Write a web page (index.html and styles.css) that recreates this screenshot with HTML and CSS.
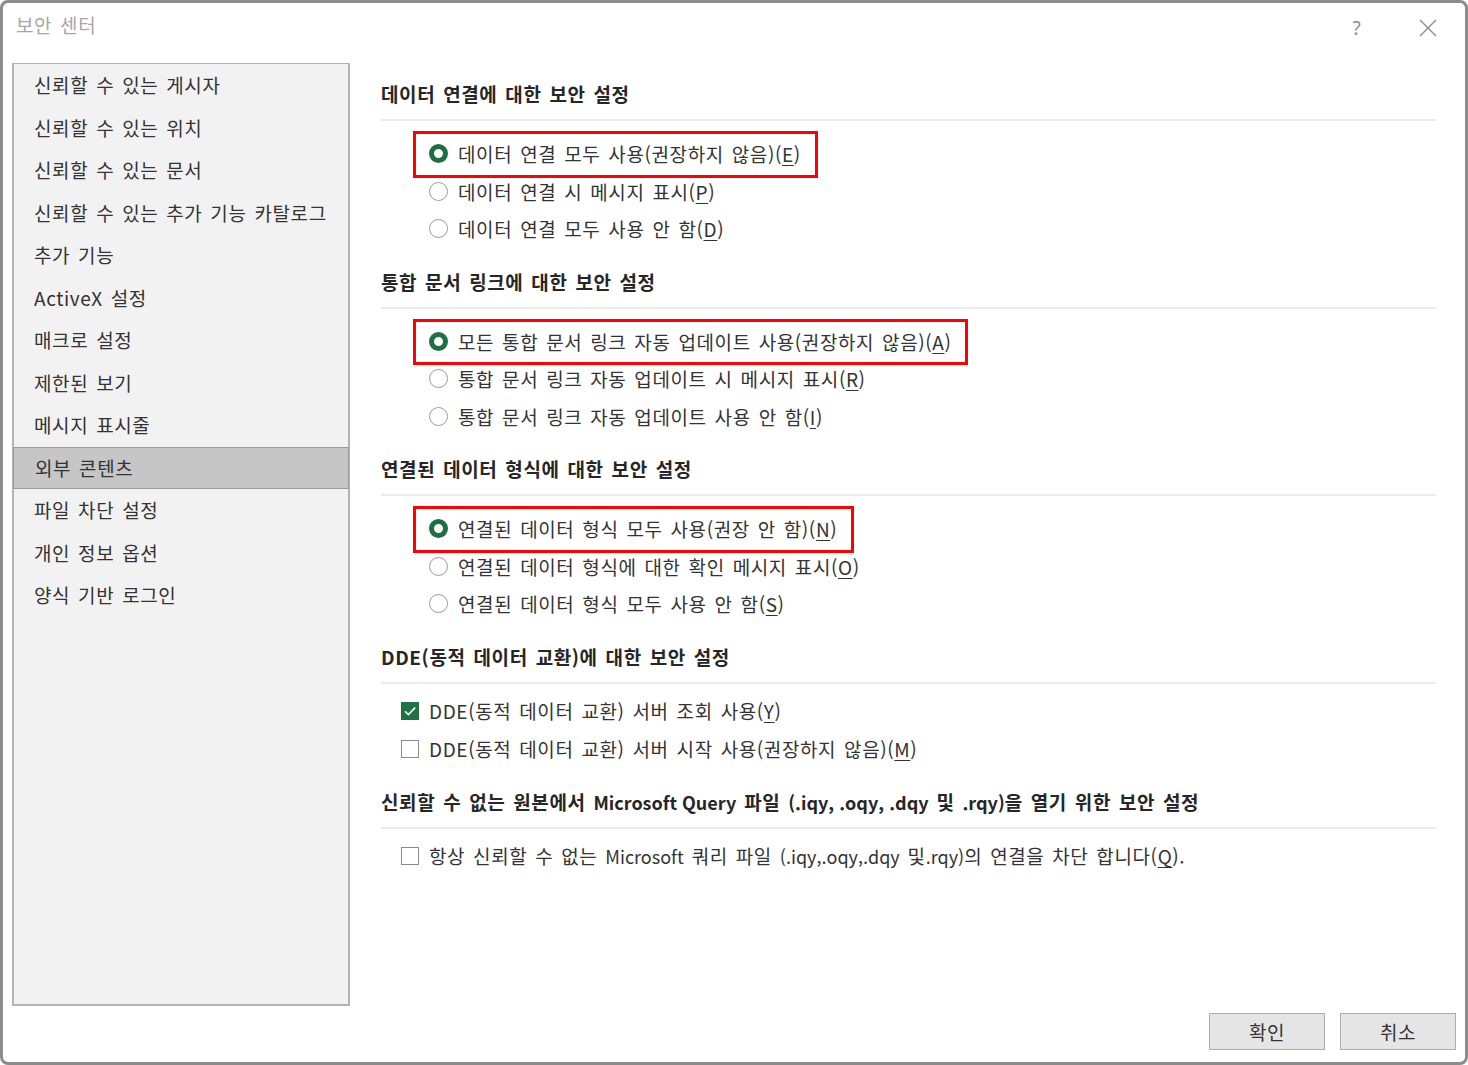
FILE: index.html
```html
<!DOCTYPE html>
<html lang="ko">

<head>
    <meta charset="UTF-8">
    <meta name="viewport" content="width=device-width, initial-scale=1.0">
    <title>보안 센터</title>

    <link rel="stylesheet" href="styles.css">
</head>

<body>

    <!-- DIALOG -->
    <div class="dialog">
        <div class="titlebar">
            <span class="titlebar__title">보안 센터</span>
            <div class="titlebar__controls">
                <span class="titlebar__help">?</span>
                <span class="titlebar__close">
                    <svg width="18" height="18" viewBox="0 0 18 18">
                        <path d="M1 1 L17 17 M17 1 L1 17" stroke="#8a8a8a" stroke-width="1.4" fill="none" />
                    </svg>
                </span>
            </div>
        </div>

        <div class="dialog__body">
            <ul class="nav">
                <li class="nav__item">신뢰할 수 있는 게시자</li>
                <li class="nav__item">신뢰할 수 있는 위치</li>
                <li class="nav__item">신뢰할 수 있는 문서</li>
                <li class="nav__item">신뢰할 수 있는 추가 기능 카탈로그</li>
                <li class="nav__item">추가 기능</li>
                <li class="nav__item">ActiveX 설정</li>
                <li class="nav__item">매크로 설정</li>
                <li class="nav__item">제한된 보기</li>
                <li class="nav__item">메시지 표시줄</li>
                <li class="nav__item nav__item--active">외부 콘텐츠</li>
                <li class="nav__item">파일 차단 설정</li>
                <li class="nav__item">개인 정보 옵션</li>
                <li class="nav__item">양식 기반 로그인</li>
            </ul>

            <div class="content">
                <!-- 데이터 연결 -->
                <section class="group">
                    <h2 class="group__title">데이터 연결에 대한 보안 설정</h2>
                    <div class="group__options group__options--radio">
                        <label class="option option--marked"><span class="radio radio--checked"></span><span>데이터 연결 모두 사용(권장하지 않음)(<u>E</u>)</span></label>
                        <label class="option"><span class="radio"></span><span>데이터 연결 시 메시지 표시(<u>P</u>)</span></label>
                        <label class="option"><span class="radio"></span><span>데이터 연결 모두 사용 안 함(<u>D</u>)</span></label>
                    </div>
                </section>

                <!-- 통합 문서 링크 -->
                <section class="group">
                    <h2 class="group__title">통합 문서 링크에 대한 보안 설정</h2>
                    <div class="group__options group__options--radio">
                        <label class="option option--marked"><span class="radio radio--checked"></span><span>모든 통합 문서 링크 자동 업데이트 사용(권장하지 않음)(<u>A</u>)</span></label>
                        <label class="option"><span class="radio"></span><span>통합 문서 링크 자동 업데이트 시 메시지 표시(<u>R</u>)</span></label>
                        <label class="option"><span class="radio"></span><span>통합 문서 링크 자동 업데이트 사용 안 함(<u>I</u>)</span></label>
                    </div>
                </section>

                <!-- 연결된 데이터 형식 -->
                <section class="group">
                    <h2 class="group__title">연결된 데이터 형식에 대한 보안 설정</h2>
                    <div class="group__options group__options--radio">
                        <label class="option option--marked"><span class="radio radio--checked"></span><span>연결된 데이터 형식 모두 사용(권장 안 함)(<u>N</u>)</span></label>
                        <label class="option"><span class="radio"></span><span>연결된 데이터 형식에 대한 확인 메시지 표시(<u>O</u>)</span></label>
                        <label class="option"><span class="radio"></span><span>연결된 데이터 형식 모두 사용 안 함(<u>S</u>)</span></label>
                    </div>
                </section>

                <!-- DDE -->
                <section class="group">
                    <h2 class="group__title">DDE(동적 데이터 교환)에 대한 보안 설정</h2>
                    <div class="group__options group__options--check">
                        <label class="option"><span class="check check--checked">
                                <svg width="16" height="16" viewBox="0 0 16 16">
                                    <path d="M3 8.2 L6.4 11.6 L13.2 4.6" stroke="#fff" stroke-width="1.6" fill="none" />
                                </svg>
                            </span><span>DDE(동적 데이터 교환) 서버 조회 사용(<u>Y</u>)</span></label>
                        <label class="option"><span class="check"></span><span>DDE(동적 데이터 교환) 서버 시작 사용(권장하지 않음)(<u>M</u>)</span></label>
                    </div>
                </section>

                <!-- Microsoft Query -->
                <section class="group">
                    <h2 class="group__title">신뢰할 수 없는 원본에서 <span class="en">Microsoft Query</span> 파일 <span class="en">(.iqy, .oqy, .dqy</span> 및 <span class="en">.rqy)</span>을 열기 위한 보안 설정</h2>
                    <div class="group__options group__options--check">
                        <label class="option"><span class="check"></span><span>항상 신뢰할 수 없는 <span class="en">Microsoft</span> 쿼리 파일 <span class="en">(.iqy,.oqy,.dqy</span> 및<span class="en">.rqy)</span>의 연결을 차단 합니다(<u>Q</u>).</span></label>
                    </div>
                </section>
            </div>
        </div>

        <div class="dialog__footer">
            <button class="dialog-btn">확인</button>
            <button class="dialog-btn">취소</button>
        </div>
    </div>
    <!-- END DIALOG -->

</body>
</html>
```

FILE: styles.css
```css
* {
    box-sizing: border-box;
}

body {
    margin: 0;
    background-color: #fff;
    font-family: "Noto Sans CJK KR", "Noto Sans", sans-serif;
    font-size: 19px;
    letter-spacing: 0.6px;
    word-spacing: 2px;
    color: #333;
}

.en {
    font-size: 18px;
    letter-spacing: 0;
    word-spacing: 0;
}

/* Dialog */

.dialog {
    width: 1468px;
    height: 1065px;
    border: 3px solid #8c8c8c;
    border-radius: 8px;
    display: flex;
    flex-direction: column;
    overflow: hidden;
}

.titlebar {
    height: 60px;
    display: flex;
    align-items: flex-start;
    padding: 9px 28px 0 13px;
}

.titlebar__title {
    line-height: 26px;
    color: #a6a6a6;
}

.titlebar__controls {
    margin-left: auto;
    display: flex;
    align-items: center;
    gap: 52px;
    height: 32px;
}

.titlebar__help {
    width: 20px;
    text-align: center;
    color: #8a8a8a;
    font-family: "Noto Sans", sans-serif;
    font-size: 19px;
}

.titlebar__close {
    display: flex;
    width: 18px;
    height: 18px;
}

.dialog__body {
    height: 943px;
    display: flex;
}

/* Nav */

.nav {
    margin: 0 0 0 9px;
    padding: 0;
    list-style: none;
    width: 338px;
    height: 943px;
    background-color: #f2f2f2;
    border: 2px solid #b4b4b4;
    border-top-width: 1px;
}

.nav__item {
    height: 42.5px;
    line-height: 42.5px;
    padding-left: 20px;
    white-space: nowrap;
}

.nav__item--active {
    background-color: #c6c6c6;
    border: 1px solid #9c9c9c;
    margin: 0 -1px;
    padding-left: 21px;
    line-height: 40.5px;
}

/* Content */

.content {
    margin-left: 31px;
    width: 1055px;
    padding-top: 18px;
}

.group__title {
    margin: 0;
    font-size: 19px;
    font-weight: 700;
    line-height: 26px;
    color: #262626;
    padding-bottom: 12px;
    border-bottom: 2px solid #ececec;
    white-space: nowrap;
}

.group__options {
    display: flex;
    flex-direction: column;
    align-items: flex-start;
    margin-bottom: 21px;
}

.group__options--radio {
    padding: 14px 0 0 48px;
}

.group__options--check {
    padding: 8px 0 0 20px;
}

.option {
    position: relative;
    display: flex;
    align-items: center;
    gap: 10px;
    height: 37.5px;
    white-space: nowrap;
}

.group__options--check .option {
    height: 38px;
}

.option u {
    text-decoration-thickness: 1px;
    text-underline-offset: 3px;
}

/* red frame over the option */
.option--marked::after {
    content: "";
    position: absolute;
    top: -4px;
    bottom: -5px;
    left: -16px;
    right: -17px;
    border: 3px solid #f00;
}

.radio {
    width: 19px;
    height: 19px;
    border: 1px solid #9a9a9a;
    border-radius: 50%;
    flex-shrink: 0;
}

.radio--checked {
    border: 5px solid #1e6f41;
}

.check {
    width: 18px;
    height: 18px;
    border: 1px solid #8a8a8a;
    flex-shrink: 0;
    display: flex;
    align-items: center;
    justify-content: center;
}

.check--checked {
    background-color: #217346;
    border-color: #217346;
}

/* Footer */

.dialog__footer {
    flex: 1;
    display: flex;
    justify-content: flex-end;
    align-items: flex-start;
    gap: 15px;
    padding: 7px 9px 0 0;
}

.dialog-btn {
    width: 116px;
    height: 37px;
    background-color: #e5e5e5;
    border: 1px solid #adadad;
    font-family: inherit;
    font-size: 19px;
    letter-spacing: 0.6px;
    color: #333;
    padding: 0;
    cursor: pointer;
}

/* END Dialog */
```
